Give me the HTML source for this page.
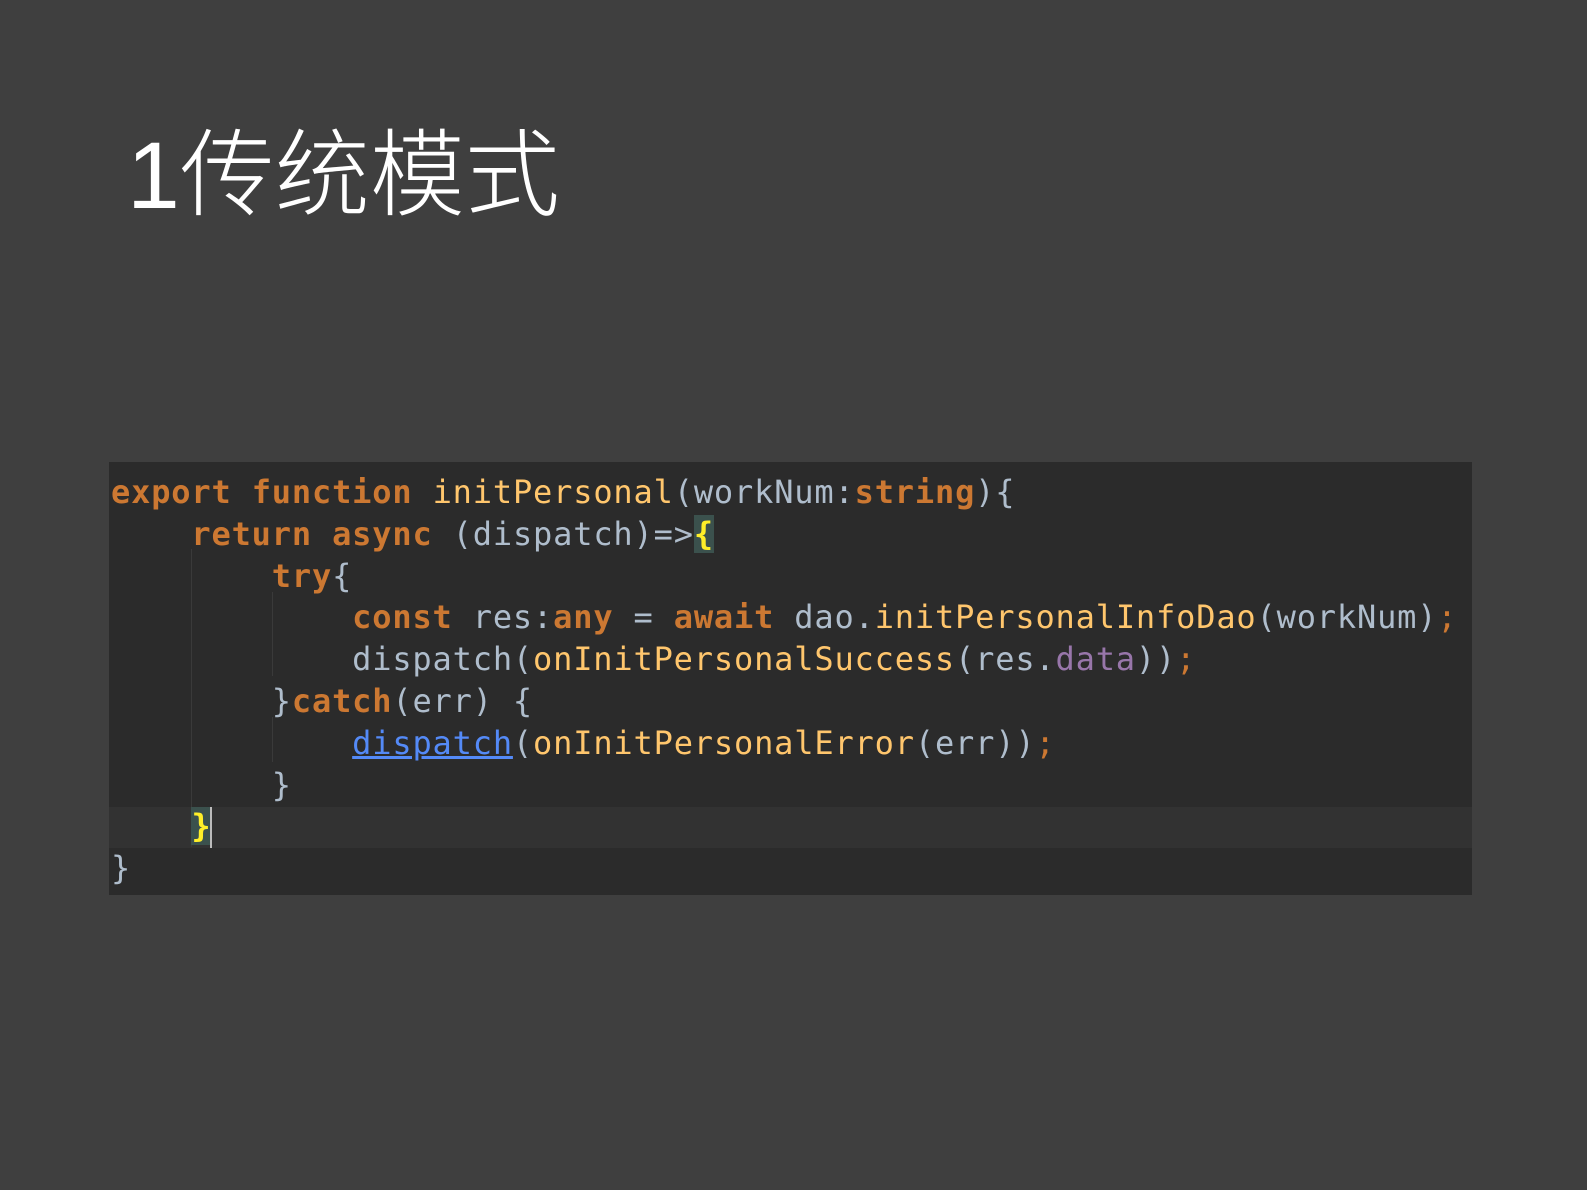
<!DOCTYPE html>
<html><head><meta charset="utf-8"><style>
html,body{margin:0;padding:0;}
body{width:1587px;height:1190px;background:#3f3f3f;position:relative;overflow:hidden;}
.title{position:absolute;left:127px;top:129px;font-family:"Liberation Sans","Noto Sans CJK SC",sans-serif;font-weight:300;font-size:95px;line-height:1;color:#fff;white-space:nowrap;}
.panel{position:absolute;left:109px;top:462px;width:1363px;height:433px;background:#2b2b2b;}
.hl{position:absolute;left:0;top:345px;width:1363px;height:41px;background:#323232;}
.code{position:absolute;left:2px;top:10px;font-family:"DejaVu Sans Mono","Liberation Mono",monospace;font-size:32px;letter-spacing:0.83px;line-height:41.8px;color:#afbdcc;white-space:pre;}
.k{color:#cc7832;font-weight:bold;}
.f{color:#ffc66d;}
.p{color:#9876aa;}
.s{color:#cc7832;}
.u{color:#548af7;text-decoration:underline;}
.b{color:#ffef28;background:#3b514d;font-weight:bold;}
.guide{position:absolute;width:1px;background:#3a3a3a;}
.cur{position:absolute;width:2px;background:#bbbbbb;z-index:2;}
</style></head><body>
<div class="title">1传统模式</div>
<div class="panel">
<div class="hl"></div>
<div class="guide" style="left:82px;top:87px;height:298px"></div>
<div class="guide" style="left:163px;top:130px;height:84px"></div>
<div class="guide" style="left:163px;top:255px;height:45px"></div>
<div class="code"><span class="k">export</span> <span class="k">function</span> <span class="f">initPersonal</span>(workNum:<span class="k">string</span>){
    <span class="k">return</span> <span class="k">async</span> (dispatch)=&gt;<span class="b">{</span>
        <span class="k">try</span>{
            <span class="k">const</span> res:<span class="k">any</span> = <span class="k">await</span> dao.<span class="f">initPersonalInfoDao</span>(workNum)<span class="s">;</span>
            dispatch(<span class="f">onInitPersonalSuccess</span>(res.<span class="p">data</span>))<span class="s">;</span>
        }<span class="k">catch</span>(err) {
            <span class="u">dispatch</span>(<span class="f">onInitPersonalError</span>(err))<span class="s">;</span>
        }
    <span class="b">}</span>
}</div>
<div class="cur" style="left:101px;top:345px;height:41px"></div>
</div>
</body></html>
